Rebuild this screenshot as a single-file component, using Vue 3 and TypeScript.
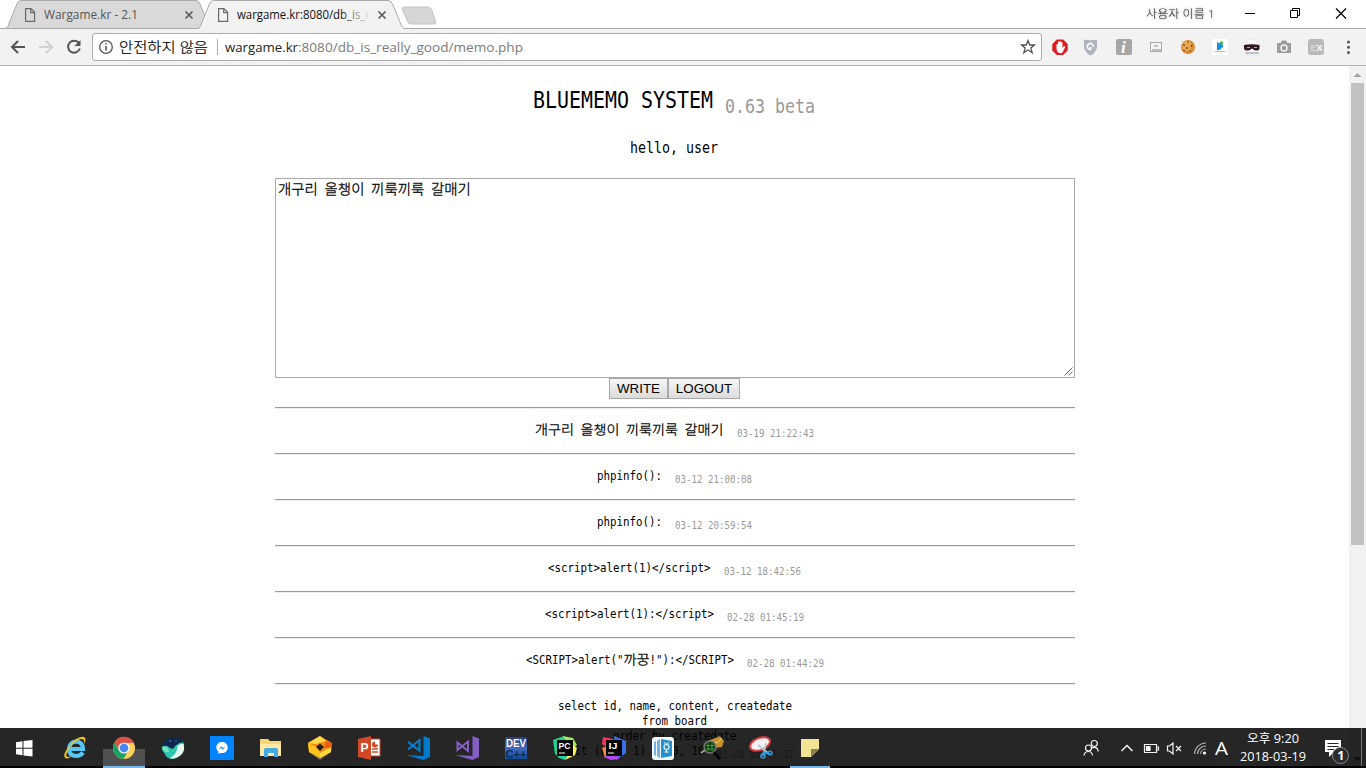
<script setup lang="ts">
import { h } from 'vue'

interface LabelProps { t: string; w: number; s: number; b: number; h: number; c?: string; f?: string }
interface MonoProps { t: string; s: number; h: number; b: number; c?: string; bold?: boolean }

const UI = '"Open Sans", "Noto Sans CJK KR", sans-serif'

// Single-line label fitted to a given width.
const Label = (p: LabelProps) =>
  h('svg', { width: p.w, height: p.h, style: 'display:block;flex:none;overflow:visible' }, [
    h('text', {
      x: 0, y: p.b, 'font-size': p.s, fill: p.c ?? '#000', textLength: p.w,
      lengthAdjust: 'spacingAndGlyphs', 'font-family': p.f ?? UI,
    }, p.t),
  ])
Label.props = ['t', 'w', 's', 'b', 'h', 'c', 'f']

// Half-width cell font: Latin takes half an em, Hangul a full em.
const Mono = (p: MonoProps) => {
  const runs = p.t.match(/[가-힣]+|[^가-힣]+/g) ?? []
  let x = 0
  const nodes = runs.map((r) => {
    const ko = /[가-힣]/.test(r)
    const w = r.length * p.s * (ko ? 1 : 0.5)
    const stroke = p.bold ? p.s * 0.036 : ko ? 0.3 : 0
    const node = h('text', {
      x, y: p.b, 'font-size': p.s * (ko ? 1 : 0.98), textLength: w, fill: p.c ?? '#000',
      lengthAdjust: 'spacingAndGlyphs', 'xml:space': 'preserve',
      stroke: stroke ? '#000' : 'none', 'stroke-width': stroke,
      'font-weight': ko ? 300 : 400,
      'font-family': ko ? '"Noto Sans CJK KR", sans-serif' : '"DejaVu Sans Mono", monospace',
    }, r)
    x += w
    return node
  })
  return h('svg', { width: x, height: p.h, style: 'display:block;flex:none;overflow:visible' }, nodes)
}
Mono.props = ['t', 's', 'h', 'b', 'c', 'bold']

const memos: { text: string; date: string }[] = [
  { text: '개구리 올챙이 끼룩끼룩 갈매기', date: '03-19 21:22:43' },
  { text: 'phpinfo():', date: '03-12 21:00:08' },
  { text: 'phpinfo():', date: '03-12 20:59:54' },
  { text: '<script>alert(1)<\/script>', date: '03-12 18:42:56' },
  { text: '<script>alert(1):<\/script>', date: '02-28 01:45:19' },
  { text: '<SCRIPT>alert("까꿍!"):<\/SCRIPT>', date: '02-28 01:44:29' },
]
const query = ['select id, name, content, createdate', 'from board', 'order by createdate']
</script>

<template>
  <div class="screen">
    <header class="tabs">
      <svg class="tabshape" width="450" height="29" viewBox="0 0 450 29">
        <path d="M5.500 28.500C8 28 8.500 25 9.500 22L17 4Q18.500.5 21 .5H196Q198.500.5 200 4L208 23L205 28.500Z" fill="#d9d9d9" stroke="#a9a9a9" />
        <path d="M0 28.500H198C200 28 201 25 202 22L209.500 4Q211 .5 213.500 .5H388Q391 .5 392.500 4L400 22Q402 28.500 405 28.500H450V30H0Z" fill="#f2f2f2" stroke="#a9a9a9" />
        <path d="M404 7H428Q430.500 7 431.500 9.500L435.500 21Q436.500 24 434 24H411Q408.500 24 407.500 21L402.500 10Q401.500 7 404 7Z" fill="#d6d6d6" stroke="#c4c4c4" />
        <g fill="none" stroke="#6a6a6a" stroke-width="1.200">
          <path d="M25.600 8.600H31L34.600 12.300V21.400H25.600ZM30.700 8.600V12.700H34.600" />
          <path d="M218.600 8.600H224L227.600 12.300V21.400H218.600ZM223.700 8.600V12.700H227.600" />
        </g>
        <path d="M185.500 11.500L192.500 18.500M192.500 11.500L185.500 18.500M378.500 11.500L385.500 18.500M385.500 11.500L378.500 18.500" stroke="#5c5c5c" stroke-width="1.700" />
        <defs>
          <linearGradient id="fade" gradientUnits="userSpaceOnUse" x1="340" x2="371" y1="0" y2="0"><stop offset="0" stop-color="#111" /><stop offset="1" stop-color="#111" stop-opacity="0" /></linearGradient>
        </defs>
        <text x="44" y="19" font-size="12" textLength="94" lengthAdjust="spacingAndGlyphs" fill="#555">Wargame.kr - 2.1</text>
        <text x="237" y="19" font-size="12" textLength="133" lengthAdjust="spacingAndGlyphs" fill="url(#fade)">wargame.kr:8080/db_is_r</text>
      </svg>
      <div class="profile"><Label t="사용자 이름 1" :w="69" :s="11.5" :b="15" :h="20" c="#333" /></div>
      <svg class="winctl" width="136" height="28" viewBox="1230 0 136 28" fill="none" stroke="#000">
        <path d="M1245 13.500H1255M1290.500 10.500H1297.500V17.500H1290.500ZM1292.500 10V8.500H1299.500V15.500H1298" /><path d="M1336 8.500L1346 18.500M1346 8.500L1336 18.500" stroke-width="1.200" />
      </svg>
    </header>

    <div class="toolbar">
      <svg width="92" height="36" viewBox="0 29 92 36" fill="none" stroke="#555" stroke-width="2">
        <path d="M25 47H12.500M18 41L12 47L18 53" />
        <path d="M39 47H51.500M46 41L52 47L46 53" stroke="#d0d0d0" />
        <path d="M79 43.200A6 6 0 1 0 79.800 48.500" /><path d="M80.500 40V46H74.500Z" fill="#555" stroke="none" />
      </svg>
      <div class="address">
        <svg width="26" height="26" viewBox="0 0 26 26"><circle cx="13" cy="13" r="6.300" fill="none" stroke="#555" stroke-width="1.300" /><path d="M13 12V16.500M13 9V10.600" stroke="#555" stroke-width="1.600" /></svg>
        <Label class="thin" t="안전하지 않음" :w="89" :s="14" :b="17.500" :h="26" />
        <i class="divider"></i>
        <Label t="wargame.kr" :w="73" :s="13.500" :b="17.500" :h="26" c="#222" />
        <Label t=":8080/db_is_really_good/memo.php" :w="225" :s="13.500" :b="17.500" :h="26" c="#7b7b7b" />
        <svg class="star" width="18" height="18" viewBox="0 0 18 18"><path d="M9 2.500L10.800 7H15.500L11.800 10L13.200 14.800L9 12L4.800 14.800L6.200 10L2.500 7H7.200Z" fill="none" stroke="#555" stroke-width="1.300" /></svg>
      </div>
      <svg width="324" height="36" viewBox="1042 29 324 36">
        <path d="M1056.800 39.500H1063.200L1067.700 44V50.500L1063.200 55H1056.800L1052.300 50.500V44Z" fill="#df1c20" />
        <path d="M1056.500 49V44.500Q1057.500 43 1058 44.500V42Q1059 41 1059.500 42V41.500Q1060.500 40.500 1061 41.800V42.500Q1062 41.500 1062.500 43V48L1063.500 46.500Q1065.500 45.800 1065 47.500L1062.500 52.500Q1060 54 1057.500 52Z" fill="#fff" />
        <path d="M1084 39.500Q1090.500 41 1097 39.500V46Q1097 52 1090.500 55.500Q1084 52 1084 46Z" fill="#aeb3bf" /><path d="M1093.300 47A3 3 0 1 0 1090.500 49.500V47" fill="none" stroke="#f8f8f8" stroke-width="1.800" />
        <rect x="1116" y="39" width="16" height="16" rx="2" fill="#a6a6a6" /><text x="1121" y="52.500" font-size="17" font-style="italic" font-weight="700" fill="#fff" font-family="Liberation Serif, serif">i</text>
        <rect x="1150.500" y="42.500" width="11" height="9" fill="#f4f4f4" stroke="#ababab" /><path d="M1154 46H1158M1152 50H1161" stroke="#aaa" stroke-width="1.300" />
        <circle cx="1188" cy="47" r="7" fill="#d88b32" /><circle cx="1187" cy="46" r="5" fill="#e9a851" /><g fill="#76431a"><circle cx="1184" cy="45" r=".9" /><circle cx="1188" cy="42" r=".8" /><circle cx="1191.500" cy="46" r="1" /><circle cx="1187" cy="48" r=".9" /><circle cx="1190" cy="51" r=".8" /><circle cx="1184" cy="50.500" r=".8" /></g>
        <path d="M1212 39H1228V55H1212Z" fill="#fff" /><path d="M1217 42L1223 45V47L1219.500 50H1217Z" fill="#168df0" /><circle cx="1221.500" cy="43" r="1.700" fill="#42b94f" /><path d="M1215 51.500H1225" stroke="#bbb" />
        <path d="M1247 39H1254L1258 43V55H1247Z" fill="#fafafa" stroke="#ddd" stroke-width=".7" /><path d="M1244 45Q1252 43.500 1259.500 45V49Q1258 51.500 1254 50L1252 48.500L1250 50Q1245.500 51.500 1244 49Z" fill="#32181e" /><path d="M1247 47.500H1250M1254 47.500H1257" stroke="#b9a5aa" stroke-width="1" /><path d="M1245.500 53H1258.500" stroke="#b9bfd0" stroke-width="2" />
        <path d="M1277 43H1280.500L1282 40.500H1286L1287.500 43H1291V53H1277Z" fill="#9d9d9d" /><circle cx="1284" cy="48" r="3" fill="#999" stroke="#f3f3f3" stroke-width="1.500" />
        <rect x="1308" y="39" width="16" height="16" rx="3" fill="#b9b9b9" /><text x="1310.500" y="50.500" font-size="9" font-weight="700" font-family="Liberation Sans, sans-serif"><tspan fill="#d8d8d8">E</tspan><tspan fill="#fff">X</tspan></text>
        <g fill="#555"><circle cx="1348.500" cy="42" r="1.500" /><circle cx="1348.500" cy="47.300" r="1.500" /><circle cx="1348.500" cy="52.600" r="1.500" /></g>
      </svg>
    </div>

    <div class="viewport">
      <main>
        <div class="title"><Mono t="BLUEMEMO SYSTEM" :s="24" :h="60" :b="42" bold /><Mono t="0.63 beta" :s="20" :h="60" :b="47" c="#999" /></div>
        <div class="hello"><Mono t="hello, user" :s="16" :h="52" :b="27" bold /></div>
        <div class="memo">
          <Mono t="개구리 올챙이 끼룩끼룩 갈매기" :s="13.300" :h="20" :b="14" />
          <svg class="grip" width="9" height="9" viewBox="0 0 9 9"><path d="M.5 8.500L8.500.5M4.500 8.500L8.500 4.500" stroke="#555" stroke-width=".9" /></svg>
        </div>
        <div class="actions"><button class="write">WRITE</button><button class="logout">LOGOUT</button></div>
        <section v-for="(m, i) in memos" :key="i" class="entry">
          <Mono :t="m.text" :s="13" :h="44" :b="25" /><Mono :t="m.date" :s="11" :h="44" :b="28" c="#999" />
        </section>
        <section class="query">
          <Mono v-for="q in query" :key="q" :t="q" :s="13" :h="15" :b="11" />
          <div class="last"><Mono t="limit (no - 1) * 10, 10" :s="13" :h="15" :b="11" /><Mono t="02-28 01:43:37" :s="11" :h="15" :b="14" c="#999" /></div>
        </section>
      </main>
      <aside class="scroll">
        <svg width="17" height="17"><path d="M4.500 11L8.500 7L12.500 11Z" fill="#a3a3a3" /></svg>
        <div class="thumb"></div>
        <svg class="down" width="17" height="17"><path d="M4.500 6L8.500 10L12.500 6Z" fill="#505050" /></svg>
      </aside>
    </div>

    <footer class="taskbar">
      <div class="start"><svg width="17" height="17" viewBox="0 0 17 17" fill="#fff"><path d="M0 2.200L6.500 1.300V7.800H0ZM7.500 1.100L16.500 0V7.800H7.500ZM0 8.800H6.500V15.200L0 14.300ZM7.500 8.800H16.500V16.500L7.500 15.400Z" /></svg></div>
      <div class="app"><svg viewBox="0 0 24 24"><path d="M20 16.500Q17.500 20 13 20Q6 19.500 6 13Q6.500 6 13 5.500Q20 6 20 13H8" fill="none" stroke="#56c5f3" stroke-width="4.200" /><path d="M2.500 22Q-1 19.500 5.500 11Q14-.5 21 1Q24 2.500 21 8Q22 2.500 18 3Q12 4 6 12.500Q1.500 19.500 4.500 21Q7 21.500 10 19Q5 23.500 2.500 22Z" fill="#f5c51c" /></svg></div>
      <div class="app active"><svg viewBox="0 0 24 24"><circle cx="12" cy="12" r="11" fill="#fdd05a" /><path d="M2.500 6.500A11 11 0 0 1 22 7H12L7 14Z" fill="#de5246" /><path d="M2.500 6.500L7.500 15L12 17L16 15L11.500 23A11 11 0 0 1 2.500 6.500Z" fill="#1aa260" /><circle cx="12" cy="12" r="5.600" fill="#fff" /><circle cx="12" cy="12" r="4.400" fill="#4587f3" /></svg></div>
      <div class="app"><svg viewBox="0 0 24 24"><path d="M2 9Q4 2 11 1H17Q22 3 22 8L15 12L8 11Z" fill="#11264f" /><path d="M1 11Q5 8 9 12Q13 14 14 10Q17 7 22 6Q25 11 21 17Q17 23 10 23Q5 22 4 18Q0 15 1 11Z" fill="#29c6af" /><path d="M13 19Q16.500 15 16.500 10Q20 7 22.500 8Q25 17 17 21Q12 23.500 9 22Z" fill="#e8fbf3" /><path d="M1 11Q7 9 8 16Q3 17 1 11Z" fill="#7ae3bc" /><circle cx="9" cy="5" r=".7" fill="#72b6c8" /><circle cx="15" cy="5" r=".6" fill="#72b6c8" /></svg></div>
      <div class="app"><svg viewBox="0 0 24 24"><path d="M0 0H24V24H0Z" fill="#0084ff" /><path d="M12 6C8.500 6 6.300 8.500 6.300 11.500Q6.300 14 8.500 15.700V18L10.500 17C15 17.700 17.700 15 17.700 11.700C17.700 8.500 15.500 6 12 6Z" fill="#fff" /><path d="M8.500 13.500L11.300 10.500L13 12L15.700 10.500L12.800 13.500L11 12Z" fill="#0084ff" /></svg></div>
      <div class="app"><svg viewBox="0 0 24 24"><path d="M1 3H9L11 5H22V20H1Z" fill="#f7d774" /><path d="M1 8H22V20H1Z" fill="#ffe9a6" /><path d="M5 21V14Q5 12 7 12H17Q19 12 19 14V21H15V17H9V21Z" fill="#42abe5" /></svg></div>
      <div class="app"><svg viewBox="0 0 24 24"><path d="M2 17L12 21L22 17L12 24Z" fill="#756b60" /><path d="M0 7L12 0L24 7L23 16L12 22L1 16Z" fill="#f58a12" /><path d="M0 7L8 11L12 16V22L1 16Z" fill="#ffc21f" /><path d="M12 0L18 5L8 8L0 7Z" fill="#ffda48" /><path d="M18 5L24 7L23 12L16 12Z" fill="#ef5a14" /><path d="M23 11V16L12 22V17Z" fill="#ffdb3c" /><path d="M12 7.500L16 11L12 15L8 11Z" fill="#26221b" /></svg></div>
      <div class="app"><svg viewBox="0 0 24 24"><path d="M12 3H23V20H12Z" fill="#fff" stroke="#d24726" /><path d="M15 13H21M15 16H21" stroke="#d24726" stroke-width="1.500" /><path d="M18 5.500A3 3 0 1 0 21 8.500H18Z" fill="#d24726" /><path d="M1 3L14 0V24L1 21Z" fill="#d24726" /><text x="3.500" y="16" font-size="12" font-weight="700" fill="#fff" font-family="Liberation Sans, sans-serif">P</text></svg></div>
      <div class="app"><svg viewBox="0 0 24 24" fill="#007acc"><path d="M17.500 0L24 2.500V21L17.500 24L0 19L17.500 20Z" /><path d="M2 6L13.500 14.500V4L2 13.500" fill="none" stroke="#0879c2" stroke-width="2.200" /></svg></div>
      <div class="app"><svg viewBox="0 0 24 24" fill="#865fc5"><path d="M17.500 0L24 2.500V21L17.500 24L0 19L17.500 20Z" /><path d="M2.500 6.500V14L13 5.500V15Z" fill="none" stroke="#865fc5" stroke-width="2" /></svg></div>
      <div class="app"><svg viewBox="0 0 24 24"><defs><linearGradient id="dev" x2="0" y2="1"><stop stop-color="#283c82" /><stop offset=".5" stop-color="#4669bd" /><stop offset="1" stop-color="#0d4d9b" /></linearGradient></defs><rect x="1" y="1" width="22" height="22" fill="url(#dev)" /><text x="2" y="11" font-size="10" textLength="20" lengthAdjust="spacingAndGlyphs" font-weight="700" fill="#fff" font-family="Liberation Sans, sans-serif">DEV</text><text x="1.500" y="21.500" font-size="11" textLength="21" lengthAdjust="spacingAndGlyphs" font-weight="700" fill="#082b59" font-family="Liberation Sans, sans-serif">C++</text></svg></div>
      <div class="app"><svg viewBox="0 0 24 24"><path d="M0 4L11 0L14 8L6 21L2 18Z" fill="#22d18b" /><path d="M10 0L20 2L24 9L18 14Z" fill="#9bea57" /><path d="M18 7L24 12L22 19L12 24Z" fill="#fcf459" /><path d="M2 17L18 14L12 24L6 22Z" fill="#29cda1" /><rect x="4" y="4" width="16" height="16" fill="#000" /><text x="5.500" y="12.500" font-size="9" textLength="12" lengthAdjust="spacingAndGlyphs" fill="#fff" font-family="Liberation Sans, sans-serif" font-weight="700">PC</text><path d="M6 17H12" stroke="#fff" /></svg></div>
      <div class="app"><svg viewBox="0 0 24 24"><path d="M1 1L11 3L7 13L0 8Z" fill="#fe315d" /><path d="M0 12L8 9L8 18L3 22Z" fill="#f98632" /><path d="M12 0L24 5V17L14 24Z" fill="#3b6fe8" /><path d="M2 21L14 15L17 23L9 24Z" fill="#b74af7" /><rect x="4" y="4" width="16" height="16" fill="#000" /><text x="6.500" y="12.500" font-size="9" textLength="9" lengthAdjust="spacingAndGlyphs" fill="#fff" font-family="Liberation Sans, sans-serif" font-weight="700">IJ</text><path d="M6 17H12" stroke="#fff" /></svg></div>
      <div class="app"><svg viewBox="0 0 24 24"><rect x="1" y="1" width="22" height="23" rx="3" fill="#f3f8fb" /><path d="M3 6L5 5V20L3 19ZM6 5L9 3V22L6 20Z" fill="#6fb4df" /><path d="M10 3L21 5V20L10 22Z" fill="#2391cf" /><circle cx="15.500" cy="11" r="2.500" fill="none" stroke="#fff" stroke-width="1.100" /><path d="M13 6.500L15.500 8L18 6.500M13.500 16H17.500M15.500 14V17" stroke="#fff" stroke-width=".9" fill="none" /></svg></div>
      <div class="app"><svg viewBox="0 0 24 24"><path d="M8 5L20 0L24 5L22 11L15 12Z" fill="#c8902d" /><path d="M9 5L17 7L22 2" fill="none" stroke="#ffdc7d" /><circle cx="10" cy="11" r="6" fill="#103a18" stroke="#77796f" stroke-width="1.500" /><path d="M8 7V15M12 7V15M6 9.500H15M6 13H14" stroke="#3dab2f" stroke-width=".8" /><path d="M14 16L20 23" stroke="#090909" stroke-width="3" /><path d="M1 17L5 14" stroke="#999" stroke-width="2" /></svg></div>
      <div class="app"><svg viewBox="0 0 24 24"><ellipse cx="11" cy="8" rx="10.500" ry="6" transform="rotate(-22 11 8)" fill="#f6f1f0" stroke="#d93b3f" stroke-width="2" /><path d="M9 9L19 17M17 7L14.500 18" stroke="#b5c7d3" stroke-width="1.800" /><path d="M14 16L21 18M15 15L14 20" stroke="#299ddb" stroke-width="2" /><circle cx="14" cy="20" r="2" fill="none" stroke="#299ddb" stroke-width="1.600" /><circle cx="21" cy="17" r="1.800" fill="none" stroke="#299ddb" stroke-width="1.600" /></svg></div>
      <div class="app note"><svg viewBox="0 0 24 24"><path d="M3 3H21V13L13 21H3Z" fill="#f3e493" /><path d="M13 13H21L13 21Z" fill="#8d8254" /></svg></div>

      <div class="tray">
        <svg width="160" height="40" viewBox="1076 728 160 40" fill="none" stroke="#f2f2f2" stroke-width="1.200">
          <circle cx="1088.500" cy="748" r="3" /><path d="M1084 755.500Q1084.500 751.500 1088.500 751.500Q1092 751.500 1092.500 755.500" /><circle cx="1094.300" cy="743.500" r="3" /><path d="M1092 748Q1097.500 746 1098.300 751.500" />
          <path d="M1121.500 751L1127 745.500L1132.500 751" stroke-width="1.500" />
          <path d="M1144.500 744.500H1156.500V752.500H1144.500ZM1157 747H1158.500V750H1157" /><path d="M1146.500 746.500H1150V750.500H1146.500Z" fill="#fff" />
          <path d="M1167.500 746H1169.500L1173 743V754L1169.500 751H1167.500ZM1176 746L1181 751M1181 746L1176 751" />
          <path d="M1194.500 754A11.500 11.500 0 0 1 1206 743M1197.500 754A8.500 8.500 0 0 1 1206 746M1200.500 754A5.500 5.500 0 0 1 1206 749" stroke="#aaa" /><circle cx="1204.500" cy="753" r="1.600" fill="#fff" stroke="none" />
          <text x="1215" y="754.500" font-size="18.500" textLength="13" lengthAdjust="spacingAndGlyphs" fill="#fff" stroke="none">A</text>
        </svg>
        <div class="clock"><Label t="오후 9:20" :w="52" :s="12" :b="14" :h="18" c="#fff" /><Label t="2018-03-19" :w="66" :s="12.500" :b="14" :h="18" c="#fff" /></div>
        <svg width="56" height="40" viewBox="1310 728 56 40"><path d="M1325 740H1341V752H1334L1329 757V752H1325Z" fill="#fff" /><path d="M1327.500 743.500H1338.500M1327.500 746.500H1338.500M1327.500 749.500H1334" stroke="#262626" /><circle cx="1340.500" cy="755.500" r="8" fill="#2b2b2b" stroke="#8c8c8c" /><text x="1337.300" y="760" font-size="12.500" font-weight="700" fill="#fff">1</text><path d="M1361.500 728V766" stroke="#777" /></svg>
      </div>
    </footer>
  </div>
</template>

<style scoped>
.screen { position: relative; width: 1366px; height: 768px; overflow: hidden; background: #fff; font-family: "Open Sans", "Noto Sans CJK KR", sans-serif; }
svg { display: block; flex: none; }
.thin { font-weight: 300; stroke: #000; stroke-width: .2px; }
.tabs { display: flex; height: 29px; box-sizing: border-box; background: linear-gradient(#a9a9a9, #a9a9a9) bottom / 100% 1px no-repeat #fff; }
.profile { margin-left: auto; padding: 3px 15px 0 0; font-weight: 300; filter: drop-shadow(0 0 1px #888); }
.toolbar { display: flex; height: 37px; box-sizing: border-box; background: #f2f2f2; border-bottom: 1px solid #b2b2b2; }
.address { display: flex; width: 950px; height: 28px; margin-top: 4px; box-sizing: border-box; border: 1px solid #adadad; border-radius: 3px; background: #fff; }
.divider { width: 1px; height: 16px; margin: 5px 7px 0 9px; background: #aaa; }
.star { margin: 4px 4px 0 auto; }
.viewport { display: flex; height: 702px; overflow: hidden; }
main { width: 1349px; display: flex; flex-direction: column; align-items: center; }
.title { display: flex; gap: 12px; height: 60px; padding-right: 1px; }
.hello { height: 52px; padding-right: 1px; }
.memo { position: relative; width: 800px; height: 200px; box-sizing: border-box; border: 1px solid #a9a9a9; padding: 1px 2px; margin-left: 1px; flex: none; }
.grip { position: absolute; right: 1px; bottom: 1px; }
.actions { display: flex; height: 29px; flex: none; }
button { height: 21px; margin: 0; padding: 1px 0; border: 1px solid #a9a9a9; border-radius: 0; background: linear-gradient(#f5f5f5, #dcdcdc); color: #000; font: 13.333px "Liberation Sans", sans-serif; box-sizing: border-box; text-align: center; }
.write { width: 59px; }
.logout { width: 72px; }
.entry, .query { width: 800px; border-top: 1px solid #9a9a9a; box-shadow: inset 0 1px #eee; flex: none; box-sizing: border-box; margin-left: 1px; padding-right: 1px; }
.entry { display: flex; justify-content: center; gap: 13px; height: 46px; padding-top: 1px; }
.query { height: 90px; display: flex; flex-direction: column; align-items: center; padding-top: 15px; }
.last { display: flex; gap: 13px; }
.scroll { display: flex; flex-direction: column; width: 17px; background: #f1f1f1; }
.thumb { width: 13px; height: 462px; margin-left: 2px; background: #c1c1c1; }
.down { margin-top: auto; }
.taskbar { position: absolute; left: 0; right: 0; bottom: 0; height: 40px; display: flex; background: linear-gradient(#000, #000) bottom / 100% 2px no-repeat rgba(0, 0, 0, .85); }
.start { width: 34.500px; padding: 12px 0 0 16px; }
.app { display: flex; justify-content: center; width: 49px; padding-top: 8px; box-sizing: border-box; }
.app svg { width: 24px; height: 24px; }
.active { background: linear-gradient(#76b9ed, #76b9ed) 3.500px 38px / 42px 2px no-repeat, linear-gradient(#505050, #505050) 3.500px 21px / 42px 19px no-repeat; }
.note { background: linear-gradient(#76b9ed, #76b9ed) 4.500px 38px / 40px 2px no-repeat; }
.tray { display: flex; margin-left: auto; }
.clock { display: flex; flex-direction: column; align-items: center; width: 74px; padding-top: 1px; }
</style>
